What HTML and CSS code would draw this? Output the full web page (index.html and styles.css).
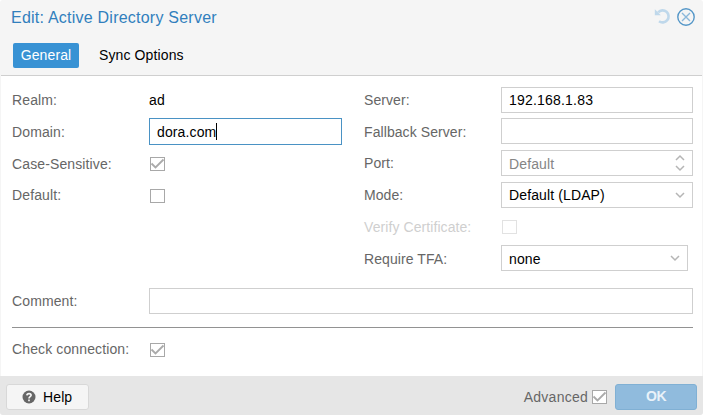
FILE: index.html
```html
<!DOCTYPE html>
<html lang="en">
<head>
<meta charset="utf-8">
<title>Edit: Active Directory Server</title>
<link rel="stylesheet" href="styles.css">
</head>
<body>
<div class="window">
  <header class="header">
    <div class="titlebar">
      <h1 class="title">Edit: Active Directory Server</h1>
      <div class="tools">
        <svg class="undo" width="17" height="17" viewBox="0 0 17 17"><path class="arc" d="M4.2 4.3A6 6 0 1 1 5 13.2"/><path class="head" d="M.8 1.2V7.200H6.800Z"/></svg>
        <svg class="close" width="18" height="18" viewBox="0 0 18 18"><circle cx="9" cy="9" r="8.200"/><path d="M5 5L13 13M13 5L5 13"/></svg>
      </div>
    </div>
    <nav class="tabs"><span class="tab active">General</span><span class="tab">Sync Options</span></nav>
  </header>
  <main class="form">
    <div class="columns">
      <div class="column">
        <div class="row first"><span class="label">Realm:</span><span class="value">ad</span></div>
        <div class="row"><span class="label low">Domain:</span><div class="field focused">dora.com<i class="caret"></i></div></div>
        <div class="row"><span class="label low">Case-Sensitive:</span><span class="check"><svg viewBox="0 0 15 14"><path d="M1.500 6.500L5.500 10.500L13.500 2.500"/></svg></span></div>
        <div class="row short"><span class="label">Default:</span><span class="check"></span></div>
      </div>
      <div class="column right">
        <div class="row first"><span class="label">Server:</span><div class="field server">192.168.1.83</div></div>
        <div class="row"><span class="label low">Fallback Server:</span><div class="field"></div></div>
        <div class="row"><span class="label">Port:</span><div class="field placeholder">Default<svg class="spin" width="12" height="18" viewBox="0 0 12 18"><path d="M2 6L6 2L10 6M2 12L6 16L10 12"/></svg></div></div>
        <div class="row short"><span class="label">Mode:</span><div class="field">Default (LDAP)<svg class="chev" width="12" height="8" viewBox="0 0 12 8"><path d="M2 2L6 6L10 2"/></svg></div></div>
        <div class="row disabled"><span class="label low">Verify Certificate:</span><span class="check"></span></div>
        <div class="row"><span class="label low">Require TFA:</span><div class="field narrow">none<svg class="chev" width="12" height="8" viewBox="0 0 12 8"><path d="M2 2L6 6L10 2"/></svg></div></div>
      </div>
    </div>
    <div class="row comment"><span class="label">Comment:</span><div class="field"></div></div>
    <div class="rule"></div>
    <div class="row connection"><span class="label">Check connection:</span><span class="check"><svg viewBox="0 0 15 14"><path d="M1.500 6.500L5.500 10.500L13.500 2.500"/></svg></span></div>
  </main>
  <footer class="footer">
    <div class="button help"><svg width="14" height="14" viewBox="0 0 14 14"><circle cx="7" cy="7" r="6.500"/><path d="M4.900 5.400C5 2.900 9.200 3 9.100 5.300C9 6.700 7 6.700 7 8.400M7 9.600V11.300"/></svg><span>Help</span></div>
    <div class="actions"><span class="advanced">Advanced</span><span class="check"><svg viewBox="0 0 15 14"><path d="M1.500 6.500L5.500 10.500L13.500 2.500"/></svg></span><div class="button ok">OK</div></div>
  </footer>
</div>
</body>
</html>
```

FILE: styles.css
```css
* { box-sizing: border-box; }
body { margin: 0; background: #fff; font: 14px/26px "Liberation Sans", Arial, sans-serif; letter-spacing: .12px; color: #000; }
.window { width: 703px; height: 415px; display: flex; flex-direction: column; background: #f5f5f5; border-radius: 3px; overflow: hidden; }
.header { height: 76px; border-bottom: 1px solid #cfcfcf; margin: 0 1px; }
.titlebar { height: 43px; padding: 4px 7px 0 10px; display: flex; justify-content: space-between; }
.title { margin: 0; font-size: 16px; font-weight: 400; line-height: 27px; letter-spacing: .23px; color: #317fbd; }
.tools { display: flex; gap: 6px; padding-top: 4px; }
.tools svg, .field svg, .check svg, .help svg { display: block; fill: none; }
.undo .arc { stroke: #bfd8eb; stroke-width: 2.600; }
.undo .head { fill: #bfd8eb; }
.close { stroke: #5597c8; stroke-width: 1.400; }
.close path { stroke: #8bb8da; }
.tabs { display: flex; padding-left: 12px; }
.tab { height: 25px; line-height: 25px; padding: 0 8px; margin-right: 12px; }
.tab.active { width: 66px; padding: 0; text-align: center; color: #fff; background: #3892d4; border-radius: 2px; }
.form { height: 300px; margin: 0 1px; padding: 11px 9px 0 11px; background: #fff; }
.columns { display: flex; gap: 22px; height: 201px; }
.column { width: 330px; }
.column.right { width: 329px; }
.row { display: flex; height: 32px; align-items: flex-start; color: #666; }
.row.first, .row.short { height: 31px; }
.label { width: 137px; flex: none; line-height: 27px; }
.label.low { line-height: 28px; }
.value { color: #000; line-height: 27px; }
.right .label { letter-spacing: .08px; }
.field { position: relative; flex: 1; display: flex; height: 26px; border: 1px solid #cfcfcf; padding-left: 7px; line-height: 25px; color: #000; background: #fff; }
.server { letter-spacing: .2px; }
.focused { height: 27px; border-color: #4a92c4; line-height: 26px; }
.caret { width: 1px; height: 17px; margin-top: 4px; background: #000; }
.placeholder { color: #858585; line-height: 27px; }
.narrow { flex: none; width: 187px; line-height: 27px; }
.field svg { position: absolute; right: 6px; stroke: #b5b5b5; stroke-width: 1.500; }
.field .spin { top: 3px; }
.field .chev { top: 8px; }
.check { width: 15px; height: 14px; margin: 7px 0 0 1px; border: 1px solid #a8a8a8; background: #fff; flex: none; }
.check svg { width: 15px; height: 14px; margin: -1px; stroke: #aaa; stroke-width: 1.800; }
.disabled { color: #cfcfcf; }
.disabled .check { border-color: #e2e2e2; }
.rule { height: 1px; margin-top: 7px; background: #929292; }
.connection { padding-top: 8px; height: 42px; }
.footer { flex: 1; background: #e6e6e6; padding: 8px 6px 0; display: flex; justify-content: space-between; }
.button { height: 26px; border-radius: 3px; border: 1px solid #d8d8d8; }
.help { width: 83px; background: #f5f5f5; display: flex; padding-left: 15px; gap: 7px; align-items: center; line-height: 24px; }
.help circle { fill: #666; }
.help path { stroke: #f5f5f5; stroke-width: 1.700; }
.actions { display: flex; color: #666; }
.advanced { margin-right: 4px; letter-spacing: .25px; }
.actions .check { margin: 6px 8px 0 0; }
.ok { width: 82px; border-color: #80b0d4; background: #90bbdd; color: #e9f2f9; font-weight: 700; letter-spacing: -.6px; text-align: center; line-height: 23px; }
```
